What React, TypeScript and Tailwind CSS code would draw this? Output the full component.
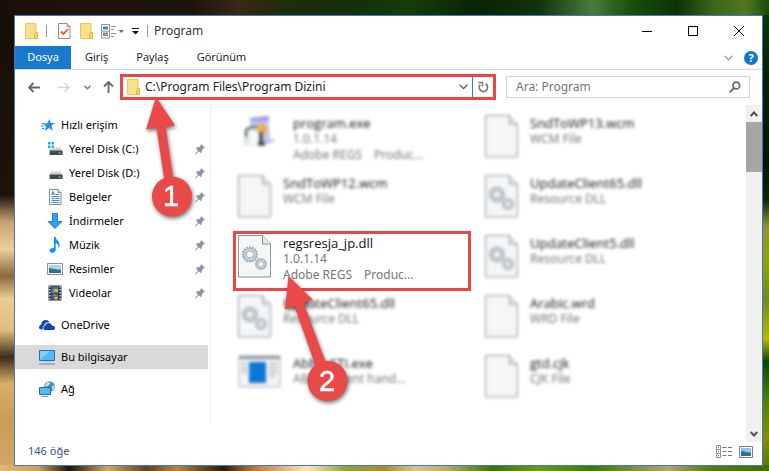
import { ReactNode } from "react";

type FileKind = "blank" | "dll" | "setup" | "app";

interface FileItem {
  name: string;
  details: string[];
  kind: FileKind;
  selected?: boolean;
}

interface NavItem {
  label: string;
  icon: ReactNode;
}

const files: FileItem[] = [
  { name: "program.exe", details: ["1.0.1.14", "Adobe REGS", "Produc..."], kind: "setup" },
  { name: "SndToWP13.wcm", details: ["WCM File"], kind: "blank" },
  { name: "SndToWP12.wcm", details: ["WCM File"], kind: "blank" },
  { name: "UpdateClient65.dll", details: ["Resource DLL"], kind: "dll" },
  { name: "regsresja_jp.dll", details: ["1.0.1.14", "Adobe REGS", "Produc..."], kind: "dll", selected: true },
  { name: "UpdateClient5.dll", details: ["Resource DLL"], kind: "dll" },
  { name: "UpdateClient65.dll", details: ["Resource DLL"], kind: "dll" },
  { name: "Arabic.wrd", details: ["WRD File"], kind: "blank" },
  { name: "AbbyySTI.exe", details: ["ABBYY event hand..."], kind: "app" },
  { name: "gtd.cjk", details: ["CJK File"], kind: "blank" },
];

const quickAccess: NavItem[] = [
  { label: "Yerel Disk (C:)", icon: <DriveIcon windows /> },
  { label: "Yerel Disk (D:)", icon: <DriveIcon /> },
  { label: "Belgeler", icon: <DocumentsIcon /> },
  { label: "İndirmeler", icon: <DownloadsIcon /> },
  { label: "Müzik", icon: <MusicIcon /> },
  { label: "Resimler", icon: <PicturesIcon /> },
  { label: "Videolar", icon: <VideosIcon /> },
];

function FolderIcon() {
  return (
    <svg width="13" height="16" viewBox="0 0 13 16" className="shrink-0">
      <path d="M.5.5h10.5v9l1.500 1v5H.5z" fill="#fbe08a" stroke="#e8c75a" />
      <path d="M10.500 9.500h2v6h-3v-4z" fill="#f5d266" stroke="#deb63c" />
    </svg>
  );
}

function PropertiesIcon() {
  return (
    <svg width="13" height="16" viewBox="0 0 13 16">
      <path d="M.5.5h8.500l3 3v12H.5z" fill="#f8f8f8" stroke="#8c9299" />
      <path d="M9 .5v3h3.500" fill="none" stroke="#8c9299" />
      <path d="m3 8.500 2.500 2.500L10 6" fill="none" stroke="#f0561d" strokeWidth="1.800" />
    </svg>
  );
}

function LayoutIcon() {
  return (
    <svg width="23" height="15" viewBox="0 0 23 15">
      <path d="M.5.5h8v13.500h-8zM.5 7.200h8" fill="#fff" stroke="#8c9299" />
      <path d="M2 2.500h5v3H2z" fill="#3d84d2" />
      <path d="M2 8.500h2.500V12H2z" fill="#3d9be0" />
      <path d="M4.500 8.500H7v2H4.500z" fill="#e05a35" />
      <path d="M4.500 10.500H7V12H4.500z" fill="#5fa846" />
      <path d="M10 2.500h5M10 5.500h3M10 9.500h5M10 12.500h3" stroke="#8c9299" />
      <path d="M17.500 6h5.500l-2.750 3z" fill="#3b76b8" />
    </svg>
  );
}

function PinIcon() {
  return (
    <svg width="10" height="11" viewBox="0 0 10 11" className="shrink-0">
      <path d="M6 0 10 3.800 8.800 4.300 6.900 6.300 6.600 8.600 5.600 9 3.800 7.200.6 10.400 0 10 3 6.400 1 4.500 1.500 3.500 4 3.300 5.700 1.400z" fill="#8794a3" />
    </svg>
  );
}

function DriveIcon({ windows }: { windows?: boolean }) {
  return (
    <svg width="16" height="16" viewBox="0 0 16 16">
      {windows && <path d="M1 1h2.500v2.500H1zM4.500 1H7v2.500H4.500zM1 4.500h2.500V7H1zM4.500 4.500H7V7H4.500z" fill="#14b1f0" />}
      <path d="M4 6.500h9.500l2 3.500h-13z" fill="#d2d4d6" />
      <path d="M2.500 9.500h13v4.500h-13z" fill="#43484c" />
      <path d="M11.500 11.500h2v1.500h-2z" fill="#46e05a" />
    </svg>
  );
}

function DocumentsIcon() {
  return (
    <svg width="16" height="16" viewBox="0 0 16 16">
      <path d="M2.500.5H11l3 3v12H2.500z" fill="#fff" stroke="#808890" />
      <path d="M11 .5v3h3" fill="none" stroke="#808890" />
      <path d="m4.500 6 1.500-3.500L7.500 6M5 5h2M8.500 5.500H12M4.500 7.500h8M4.500 9.500h3M8.500 9.500h4M4.500 11.500h8M4.500 13.500h8" fill="none" stroke="#2f8ad0" />
    </svg>
  );
}

function DownloadsIcon() {
  return (
    <svg width="16" height="16" viewBox="0 0 16 16">
      <path d="M5.500.5h5v8h4.500L8 15.500 1 8.500h4.500z" fill="#3a9bec" stroke="#2483d5" />
    </svg>
  );
}

function MusicIcon() {
  return (
    <svg width="16" height="16" viewBox="0 0 16 16">
      <path d="M7 0h1.700c.3 3.500 4 4.300 4 7.600 0 1.400-.5 2.600-1.300 3.400.5-2.800-.6-4.300-2.700-4.800v6.600c0 1.800-1.400 3-3.400 3-1.600 0-2.700-.8-2.700-2.100 0-1.700 2-3 4.400-2.500z" fill="#0f96f0" />
    </svg>
  );
}

function PicturesIcon() {
  return (
    <svg width="16" height="12" viewBox="0 0 16 12">
      <path d="M.5.5h15v11H.5z" fill="#fff" stroke="#8a9198" />
      <path d="M2 2h12v8H2z" fill="#a9d6f5" />
      <path d="M2 5c3 0 4 1.500 12 1.500V10H2z" fill="#3a7d74" />
      <path d="M2 8h12v2H2z" fill="#2b68a8" />
    </svg>
  );
}

function VideosIcon() {
  return (
    <svg width="16" height="16" viewBox="0 0 16 16">
      <path d="M1.500.5h13v15h-13z" fill="#2b2d33" />
      <path d="M2.800 1v14M13.200 1v14" stroke="#e6e6e6" strokeWidth="1.400" strokeDasharray="1.500 1.500" />
      <path d="M4.500 1.500h7V8h-7z" fill="#3678c8" />
      <path d="M4.500 8.500h7v6h-7z" fill="#2f66b5" />
      <path d="M7 4h4v3H7z" fill="#f3a929" />
      <path d="M4.500 6h4v2h-4z" fill="#5ea43a" />
      <path d="M5 10.500 9 9l1.500 3z" fill="#e8622c" />
      <path d="M7.500 12h3v2.500h-3z" fill="#f0c230" />
    </svg>
  );
}

function QuickAccessIcon() {
  return (
    <svg width="14" height="13" viewBox="0 0 14 13">
      <path d="m8.500 0 1.200 4H14l-3.500 2.700 1.200 5-3.700-2.600L3.800 12l1.200-4.600L2.300 5l4-.7z" fill="#2b8fe0" />
      <path d="M.5 4.500h3M0 7h3M1 9.500h2.500" stroke="#2b8fe0" />
    </svg>
  );
}

function OneDriveIcon() {
  return (
    <svg width="16" height="10" viewBox="0 0 16 10">
      <path d="M0 7.600C0 6 1 5 2.300 4.800 2.300 2 4.300 0 6.600 0c1.800 0 3 .8 3.800 2.300-3.200-.5-5 1.300-5.100 3.200C4 6 3.300 7.500 3.800 9.400 1.300 9.500 0 9 0 7.600z" fill="#0d49ac" />
      <path d="M4.300 8.300c0-1.400.9-2.300 2-2.500C6.500 3.900 8 3 9.500 3c1.700 0 2.900 1 3.400 2.500C14.800 5.500 16 6.500 16 8s-.9 2-2.200 2H6.200c-1.200 0-1.900-.7-1.900-1.700z" fill="#0d49ac" />
    </svg>
  );
}

function ComputerIcon() {
  return (
    <svg width="16" height="15" viewBox="0 0 16 15">
      <path d="M.5.5h15v10H.5z" fill="#52b9fa" stroke="#2a6f9c" />
      <path d="M1 10 11 1H1z" fill="#7dcffc" />
      <path d="M0 14h16" stroke="#6b90ae" />
      <path d="M4 12h8" stroke="#b8cad8" />
    </svg>
  );
}

function NetworkIcon() {
  return (
    <svg width="16" height="16" viewBox="0 0 16 16">
      <circle cx="10.500" cy="5.500" r="5.300" fill="#4c91b4" />
      <path d="M8 1.500c2-1 3.500 0 3 1.500S8.500 4 8 6L5.800 4.500zM13 5l2.300-.5c.3 2-.6 4-2.300 5z" fill="#b9dce9" />
      <path d="M.5 6.500h11v7H.5z" fill="#52b9fa" stroke="#2a6f9c" />
      <path d="M3 15.500h6" stroke="#6b90ae" />
    </svg>
  );
}

const gearTeeth = "M0-7v14M-7 0H7M-5-5 5 5M5-5-5 5M-2.700-6.500 2.700 6.500M2.700-6.500-2.700 6.500M-6.500-2.700 6.500 2.700M-6.500 2.700 6.500-2.700";

function Gear({ transform }: { transform: string }) {
  return (
    <g transform={transform}>
      <path d={gearTeeth} stroke="#98a6b0" strokeWidth="1.500" />
      <circle r="5.600" fill="#ccd5db" stroke="#98a6b0" strokeWidth=".7" />
      <circle r="3.200" fill="#f4f6f7" stroke="#98a6b0" strokeWidth=".8" />
    </g>
  );
}

function FileIcon({ kind }: { kind: FileKind }) {
  if (kind === "app") {
    return (
      <svg width="43" height="33" viewBox="0 0 43 33" className="shrink-0">
        <path d="M1 1h41v31H1z" fill="#f2f4f5" stroke="#a9b0b4" />
        <path d="M1 1h41v3H1z" fill="#8c9499" />
        <path d="M11 7h17v21H11z" fill="#0a78d7" />
        <path d="M31 9h8M31 13h8M31 17h8M31 21h6M4 9h5M4 13h5M4 17h5" stroke="#b9bfc3" strokeWidth="2" />
      </svg>
    );
  }
  if (kind === "setup") {
    return (
      <svg width="43" height="33" viewBox="0 0 43 33" className="shrink-0">
        <path d="M12 3 30 1l2 24-7 5H12z" fill="#c3c4f0" />
        <path d="M12 3 31 1v5H12z" fill="#9c9de0" />
        <path d="M5 30 7 16l4-4h13v18z" fill="#dfe3ea" />
        <path d="M8 22v-7c3-3 9-4 14-2" fill="none" stroke="#46604c" strokeWidth="2" />
        <path d="M11 17h9v12h-9z" fill="#f9f9f9" />
        <circle cx="24" cy="14" r="5" fill="#f0b04a" />
        <path d="M23 17v12M20 29h7" stroke="#303840" strokeWidth="3" />
        <path d="m28 28 8-3" stroke="#a9b4d8" strokeWidth="2" />
      </svg>
    );
  }
  return (
    <svg width="33" height="43" viewBox="0 0 33 43" className="shrink-0">
      <path d="M.5.5h24l8 8.500v33H.5z" fill="#f4f6f7" stroke="#8d9395" />
      <path d="M24.500.5V9h8" fill="#e4e7e8" stroke="#8d9395" />
      {kind === "dll" && (
        <>
          <Gear transform="translate(12 19.500) scale(1.150)" />
          <Gear transform="translate(23 29) scale(.85)" />
        </>
      )}
    </svg>
  );
}

function FileTile({ file }: { file: FileItem }) {
  const [type, ...rest] = file.details;
  const frame = file.selected
    ? "border-[3px] border-[#e94747] pl-[2px] pt-[1px]"
    : "blur-[1px] pl-[5px] pt-1";

  return (
    <li className={`h-[60px] w-[238px] ${frame}`}>
      <button type="button" className={`flex items-start gap-3 text-left ${file.selected ? "" : "blur-[1px]"}`}>
        <FileIcon kind={file.kind} />
        <span className="flex flex-col text-[12px] leading-4 text-[#757575]">
          <span className="font-['Open_Sans',sans-serif] text-[13px] text-[#111]">{file.name}</span>
          <span>{type}</span>
          {rest.length > 0 && (
            <span className="flex gap-3">
              {rest.map((text) => (
                <span key={text}>{text}</span>
              ))}
            </span>
          )}
        </span>
      </button>
    </li>
  );
}

function TitleBar() {
  return (
    <header className="flex h-[30px] items-center">
      <div className="flex flex-1 items-center pl-[10px]">
        <FolderIcon />
        <span className="ml-2 h-3 w-px bg-[#9a9a9a]" />
        <button type="button" aria-label="Özellikler" className="ml-[11px]">
          <PropertiesIcon />
        </button>
        <button type="button" aria-label="Yeni klasör" className="ml-[9px]">
          <FolderIcon />
        </button>
        <button type="button" aria-label="Düzen" className="ml-2">
          <LayoutIcon />
        </button>
        <button type="button" aria-label="Hızlı erişim araç çubuğu" className="ml-2">
          <svg width="7" height="7" viewBox="0 0 7 7">
            <path d="M0 .5h7" stroke="#111" />
            <path d="M0 3h7L3.500 6.500z" fill="#111" />
          </svg>
        </button>
        <span className="ml-2 h-3 w-px bg-[#9a9a9a]" />
        <h1 className="ml-[6px] text-[12px] text-[#333]">Program</h1>
      </div>
      <div className="flex">
        <button type="button" aria-label="Simge durumuna küçült" className="flex w-[46px] justify-center">
          <svg width="10" height="10" viewBox="0 0 10 10">
            <path d="M0 5.500h10" stroke="#000" />
          </svg>
        </button>
        <button type="button" aria-label="Ekranı kapla" className="flex w-[46px] justify-center">
          <svg width="10" height="10" viewBox="0 0 10 10">
            <path d="M.5.5h9v9h-9z" fill="none" stroke="#000" />
          </svg>
        </button>
        <button type="button" aria-label="Kapat" className="flex w-[46px] justify-center">
          <svg width="10" height="10" viewBox="0 0 10 10">
            <path d="m0 0 10 10M10 0 0 10" stroke="#000" />
          </svg>
        </button>
      </div>
    </header>
  );
}

function Ribbon() {
  return (
    <div className="flex h-6 items-center border-b border-[#d9dadb] text-[11px] text-[#111]">
      <button type="button" className="h-full w-14 bg-[#1979ca] text-white">
        Dosya
      </button>
      <div className="ml-[14px] flex gap-7 font-['Open_Sans',sans-serif]">
        <button type="button">Giriş</button>
        <button type="button">Paylaş</button>
        <button type="button">Görünüm</button>
      </div>
      <button type="button" aria-label="Şeridi genişlet" className="ml-auto">
        <svg width="9" height="6" viewBox="0 0 9 6">
          <path d="m.7.7 3.800 4 3.800-4" fill="none" stroke="#a0a0a0" strokeWidth="1.300" />
        </svg>
      </button>
      <button
        type="button"
        aria-label="Yardım"
        className="mr-1 ml-[11px] flex size-[14px] items-center justify-center rounded-full bg-[#0f77d3] text-[11px] leading-none font-bold text-white"
      >
        ?
      </button>
    </div>
  );
}

function AddressBar() {
  return (
    <div className="flex items-center pt-1 pr-3 pb-[1px] pl-[13px]">
      <button type="button" aria-label="Geri">
        <svg width="12" height="11" viewBox="0 0 12 11">
          <path d="M12 5.500H1M5.500 1 1 5.500 5.500 10" fill="none" stroke="#686868" strokeWidth="1.800" />
        </svg>
      </button>
      <button type="button" aria-label="İleri" className="ml-[18px]">
        <svg width="12" height="11" viewBox="0 0 12 11">
          <path d="M0 5.500h11M6.500 1 11 5.500 6.500 10" fill="none" stroke="#d6d6d6" strokeWidth="1.500" />
        </svg>
      </button>
      <button type="button" aria-label="Son konumlar" className="ml-[14px]">
        <svg width="7" height="5" viewBox="0 0 7 5">
          <path d="m.5.7 3 3 3-3" fill="none" stroke="#808080" strokeWidth="1.600" />
        </svg>
      </button>
      <button type="button" aria-label="Yukarı" className="ml-3">
        <svg width="11" height="12" viewBox="0 0 11 12">
          <path d="M5.500 12V1M1 5.500 5.500 1 10 5.500" fill="none" stroke="#686868" strokeWidth="1.800" />
        </svg>
      </button>
      <div className="ml-[6px] flex h-[26px] flex-1 items-center border-[3px] border-[#e94747] pl-1">
        <FolderIcon />
        <input
          type="text"
          aria-label="Adres"
          defaultValue="C:\Program Files\Program Dizini"
          className="ml-[5px] w-0 flex-1 text-[12px] text-[#222] outline-none"
        />
        <button type="button" aria-label="Önceki konumlar" className="mr-1">
          <svg width="9" height="6" viewBox="0 0 9 6">
            <path d="m.6.6 3.900 4 3.900-4" fill="none" stroke="#505050" strokeWidth="1.300" />
          </svg>
        </button>
        <button type="button" aria-label="Yenile" className="flex h-full w-[21px] items-center justify-center border-l border-[#1b86d8]">
          <svg width="11" height="12" viewBox="0 0 11 12">
            <path d="M7.500 2.700A4.200 4.200 0 1 1 2.300 3.500" fill="none" stroke="#777" strokeWidth="1.700" />
            <path d="M.5 1.500h4V5.500" fill="none" stroke="#777" strokeWidth="1.500" />
          </svg>
        </button>
      </div>
      <form className="ml-[10px] flex h-[22px] w-[244px] items-center border border-[#d4d4d4] pr-2 pl-[9px]">
        <input
          type="search"
          aria-label="Ara"
          placeholder="Ara: Program"
          className="w-0 flex-1 text-[12px] outline-none placeholder:text-[#777]"
        />
        <svg width="12" height="12" viewBox="0 0 12 12">
          <circle cx="7.300" cy="4.500" r="3.400" fill="none" stroke="#6b6b6b" strokeWidth="1.700" />
          <path d="M5 7 .7 11.300" stroke="#6b6b6b" strokeWidth="1.800" />
        </svg>
      </form>
    </div>
  );
}

function Sidebar() {
  return (
    <nav className="w-[193px] shrink-0 pt-2 text-[11px] text-black">
      <a href="#quick-access" className="flex h-6 items-center gap-[6px] pl-[26px]">
        <QuickAccessIcon />
        Hızlı erişim
      </a>
      {quickAccess.map((item) => (
        <a key={item.label} href="#folder" className="flex h-6 items-center pr-[3px] pl-8">
          <span className="flex w-4 justify-center">{item.icon}</span>
          <span className="ml-[6px] flex-1">{item.label}</span>
          <PinIcon />
        </a>
      ))}
      <a href="#onedrive" className="mt-2 flex h-6 items-center gap-[6px] pl-6">
        <OneDriveIcon />
        OneDrive
      </a>
      <a href="#computer" aria-current="page" className="mt-2 flex h-6 items-center gap-[6px] bg-[#d9d9d9] pl-6">
        <ComputerIcon />
        Bu bilgisayar
      </a>
      <a href="#network" className="mt-2 flex h-6 items-center gap-[6px] pl-6">
        <NetworkIcon />
        Ağ
      </a>
    </nav>
  );
}

function Scrollbar() {
  return (
    <div className="flex w-4 shrink-0 flex-col items-center bg-[#f0f0f0]">
      <button type="button" aria-label="Yukarı kaydır" className="flex h-[17px] items-center">
        <svg width="8" height="6" viewBox="0 0 8 6">
          <path d="m.7 5 3.300-3.500L7.300 5" fill="none" stroke="#505050" strokeWidth="1.900" />
        </svg>
      </button>
      <div className="h-[50px] w-full bg-[#a6a6a6]" />
      <button type="button" aria-label="Aşağı kaydır" className="mt-auto flex h-[17px] items-center">
        <svg width="8" height="6" viewBox="0 0 8 6">
          <path d="M.7 1 4 4.500 7.300 1" fill="none" stroke="#505050" strokeWidth="1.900" />
        </svg>
      </button>
    </div>
  );
}

function StatusBar() {
  return (
    <footer className="flex h-[23px] items-center pr-[9px] pb-1 pl-[13px] text-[11px] text-[#3c5478]">
      <span className="flex-1">146 öğe</span>
      <button type="button" aria-label="Ayrıntılar">
        <svg width="17" height="13" viewBox="0 0 17 13">
          <path d="M.5.5h4v12h-4zM.5 4.500h4M.5 8.500h4" fill="#fff" stroke="#8d9399" />
          <path d="M2 2.500h1M2 6.500h1" stroke="#2c83d0" />
          <path d="M2 10.500h1" stroke="#d23b2c" />
          <path d="M6.500 2.500h4M12 2.500h4M6.500 6.500h4M12 6.500h4M6.500 10.500h4M12 10.500h4" stroke="#6d7379" />
        </svg>
      </button>
      <button type="button" aria-label="Büyük simgeler" className="ml-[6px]">
        <svg width="14" height="12" viewBox="0 0 14 12">
          <path d="M.5.5h13v11H.5z" fill="#fff" stroke="#767d84" />
          <path d="M2 2h10v8H2z" fill="#8cc5f2" />
          <path d="M2 5c3 0 4 1.500 10 1.500V10H2z" fill="#2f7480" />
          <path d="M2 8h10v2H2z" fill="#2768ae" />
        </svg>
      </button>
    </footer>
  );
}

// numbered arrows that lie over the window
function Callouts() {
  return (
    <svg
      width="380"
      height="420"
      viewBox="0 0 380 420"
      className="pointer-events-none absolute top-0 left-0 drop-shadow-[1px_2px_2px_rgba(0,0,0,0.55)]"
    >
      <g fill="#e94949">
        <path d="M156 97 175 125.500 165.500 127 173.500 180 164.500 181 156.500 128 146 129.500z" />
        <circle cx="172" cy="196.500" r="20" />
        <path d="M288.500 276 312.500 299.500 303.500 303 326 363 316 367 294.500 306 285 309.500z" />
        <circle cx="327.500" cy="381" r="20" />
      </g>
      <g
        fill="#fff"
        stroke="#fff"
        strokeWidth=".5"
        fontSize="29"
        textAnchor="middle"
        className="font-['Liberation_Sans',sans-serif]"
      >
        <text x="171" y="206">
          1
        </text>
        <text x="327" y="391">
          2
        </text>
      </g>
    </svg>
  );
}

function Wallpaper() {
  return (
    <div aria-hidden="true" className="absolute inset-0 flex flex-col">
      <div className="h-[15px] bg-[linear-gradient(90deg,#1a0f08_0%,#20140a_12%,#1c150a_25%,#3a2716_31%,#1f2b0f_37%,#13300c_46%,#153c0a_53%,#082305_62%,#10330a_70%,#4b7b3c_77%,#175008_82%,#0c3305_88%,#3d681a_93%,#4f7622_97%,#1d4a0c_100%)]" />
      <div className="flex flex-1 justify-between">
        <div className="w-[14px] bg-[linear-gradient(180deg,#170e08_0%,#1d130b_40%,#c6a272_46%,#ead09a_52%,#8a683c_58%,#e9cd92_63%,#e2bd7c_70%,#3d2c16_76%,#d9ae68_82%,#c99c58_90%,#d2a564_100%)]" />
        <div className="w-[6px] bg-[linear-gradient(180deg,#0c3508_0%,#072206_12%,#041603_33%,#0c2504_41%,#8f8f38_47%,#8ea507_55%,#6f8a20_63%,#b5b900_72%,#0e4206_77%,#4f8208_86%,#8a8c06_94%,#547d05_100%)]" />
      </div>
      <div className="h-[6px] bg-[linear-gradient(90deg,#e0b878_0%,#caa160_5%,#1e140a_9%,#d3a765_14%,#5d4322_19%,#b98244_23%,#2b1a0c_29%,#b7793c_33%,#fbe6bd_40%,#8fa044_45%,#a58f2c_50%,#d5c694_54%,#b8ae6a_58%,#3f7108_64%,#6c9a1a_70%,#3f7804_77%,#b3a374_87%,#5a7b14_92%,#3e6c06_100%)]" />
    </div>
  );
}

export default function App() {
  return (
    <main className="relative flex min-h-screen flex-col pt-[15px] pr-[6px] pb-[5px] pl-[14px] font-['Noto_Sans','Open_Sans',sans-serif]">
      <Wallpaper />
      <section className="relative flex flex-1 flex-col border border-[#4577bd] bg-white">
        <TitleBar />
        <Ribbon />
        <AddressBar />
        <div className="mt-1 flex flex-1">
          <Sidebar />
          <div className="mb-[18px] ml-[2px] w-px shrink-0 bg-[#f0f0f0]" />
          <ul className="grid flex-1 grid-cols-[247px_1fr] content-start pt-[6px] pl-[22px]">
            {files.map((file, index) => (
              <FileTile key={index} file={file} />
            ))}
          </ul>
          <Scrollbar />
        </div>
        <StatusBar />
      </section>
      <Callouts />
    </main>
  );
}
